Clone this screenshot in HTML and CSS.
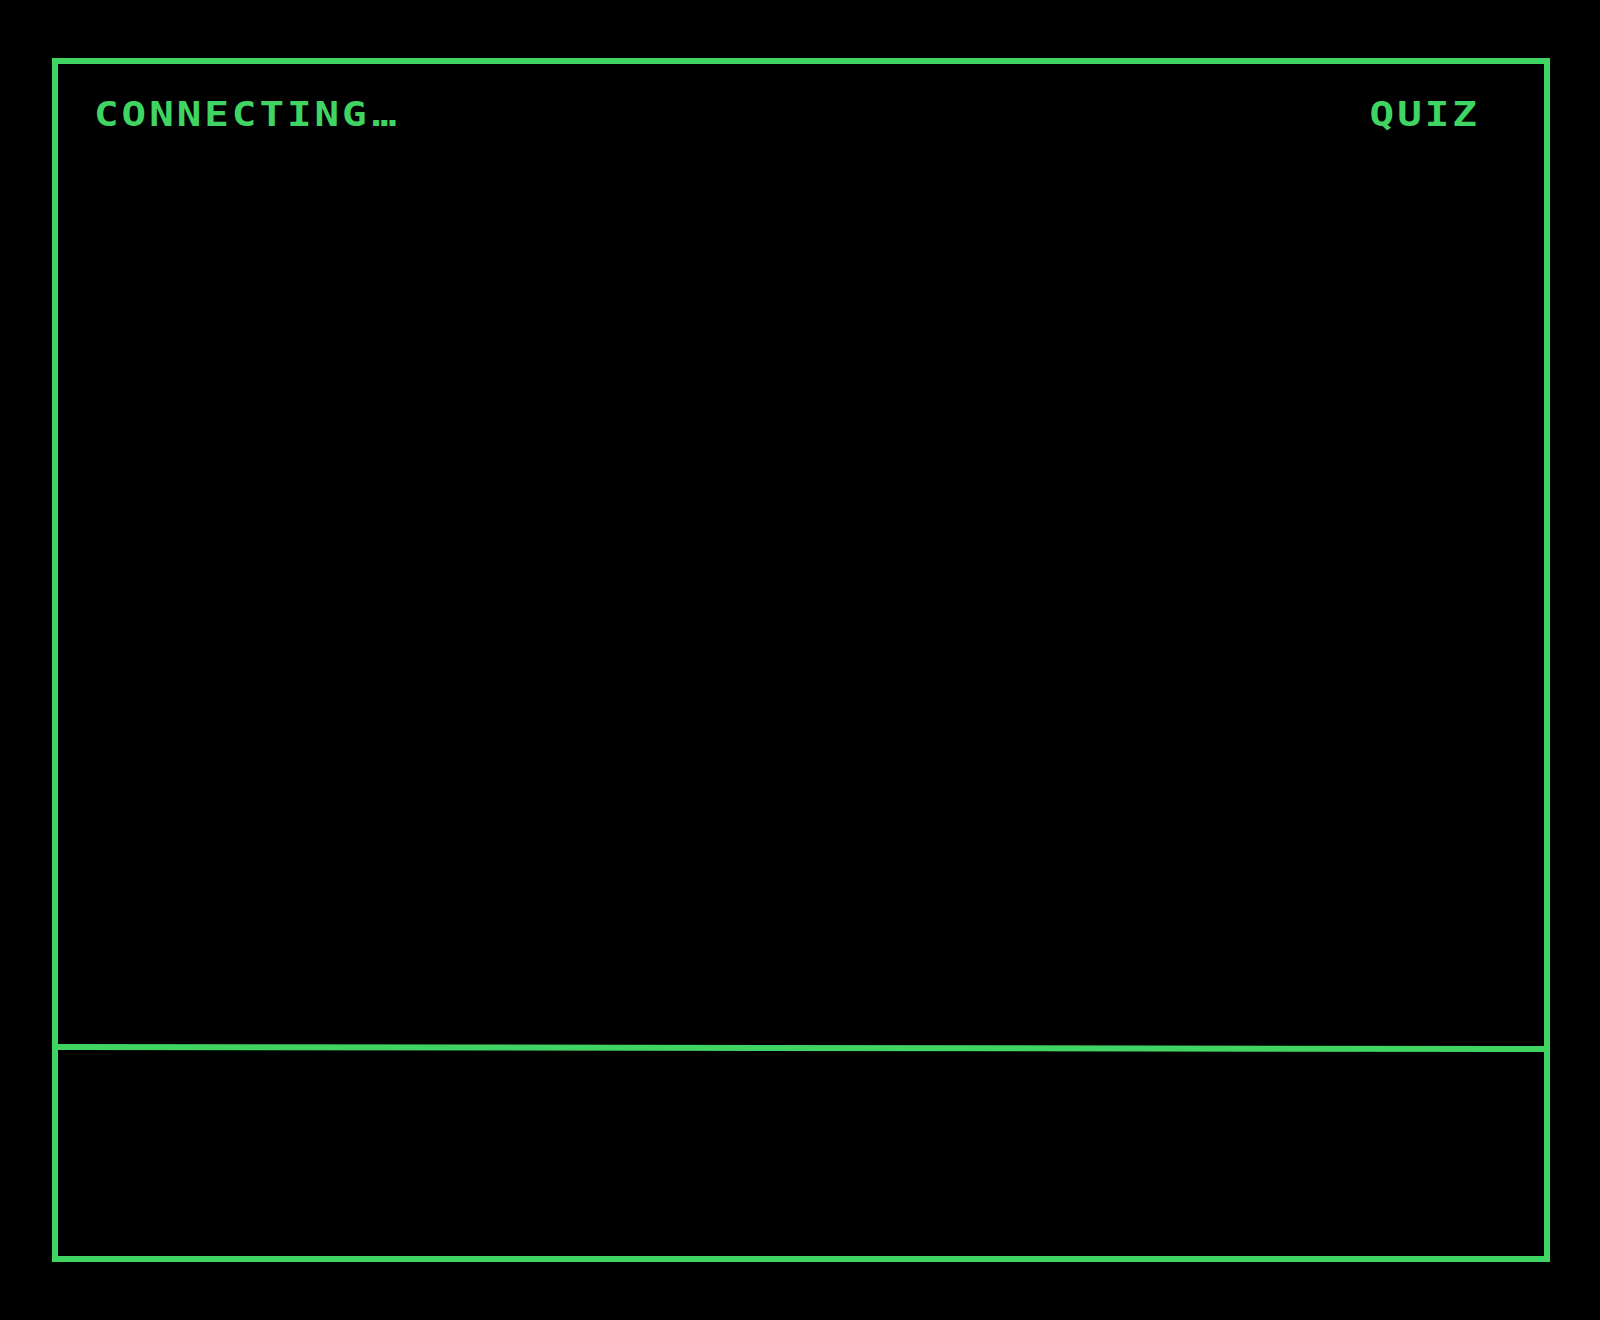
FILE: index.html
```html
<!DOCTYPE html>
<html lang="en">
<head>
<meta charset="utf-8">
<title>Quiz</title>
<link rel="stylesheet" href="styles.css">
</head>
<body>
<main class="screen">
  <section class="stage">
    <header class="status-bar">
      <span class="status">CONNECTING<span class="dots">…</span></span>
      <span class="mode">QUIZ</span>
    </header>
  </section>
  <div class="divider"></div>
  <section class="console"></section>
</main>
</body>
</html>
```

FILE: styles.css
```css
html, body {
  margin: 0;
  padding: 0;
  background: #000;
}

body {
  width: 1600px;
  height: 1320px;
  overflow: hidden;
}

.screen {
  box-sizing: border-box;
  margin: 58px 0 0 52px;
  width: 1498px;
  height: 1204px;
  border: 6px solid #40d463;
  display: flex;
  flex-direction: column;
}

.stage {
  height: 981px;
}

.status-bar {
  display: flex;
  justify-content: space-between;
  align-items: flex-start;
  padding: 33px 67px 0 36px;
  font-family: "DejaVu Sans Mono", "Liberation Mono", monospace;
  font-weight: bold;
  font-size: 34px;
  line-height: 34px;
  letter-spacing: 2.5px;
  color: #40d463;
}

.status,
.mode {
  display: inline-block;
  transform: scaleX(1.2);
}

.status {
  transform-origin: left top;
}

.dots {
  margin-left: 2px;
}

.mode {
  transform-origin: right top;
  margin-right: -2.5px;
}

.divider {
  height: 6px;
  background: #40d463;
  transform: rotate(0.077deg);
}

.console {
  flex: 1;
}
```
